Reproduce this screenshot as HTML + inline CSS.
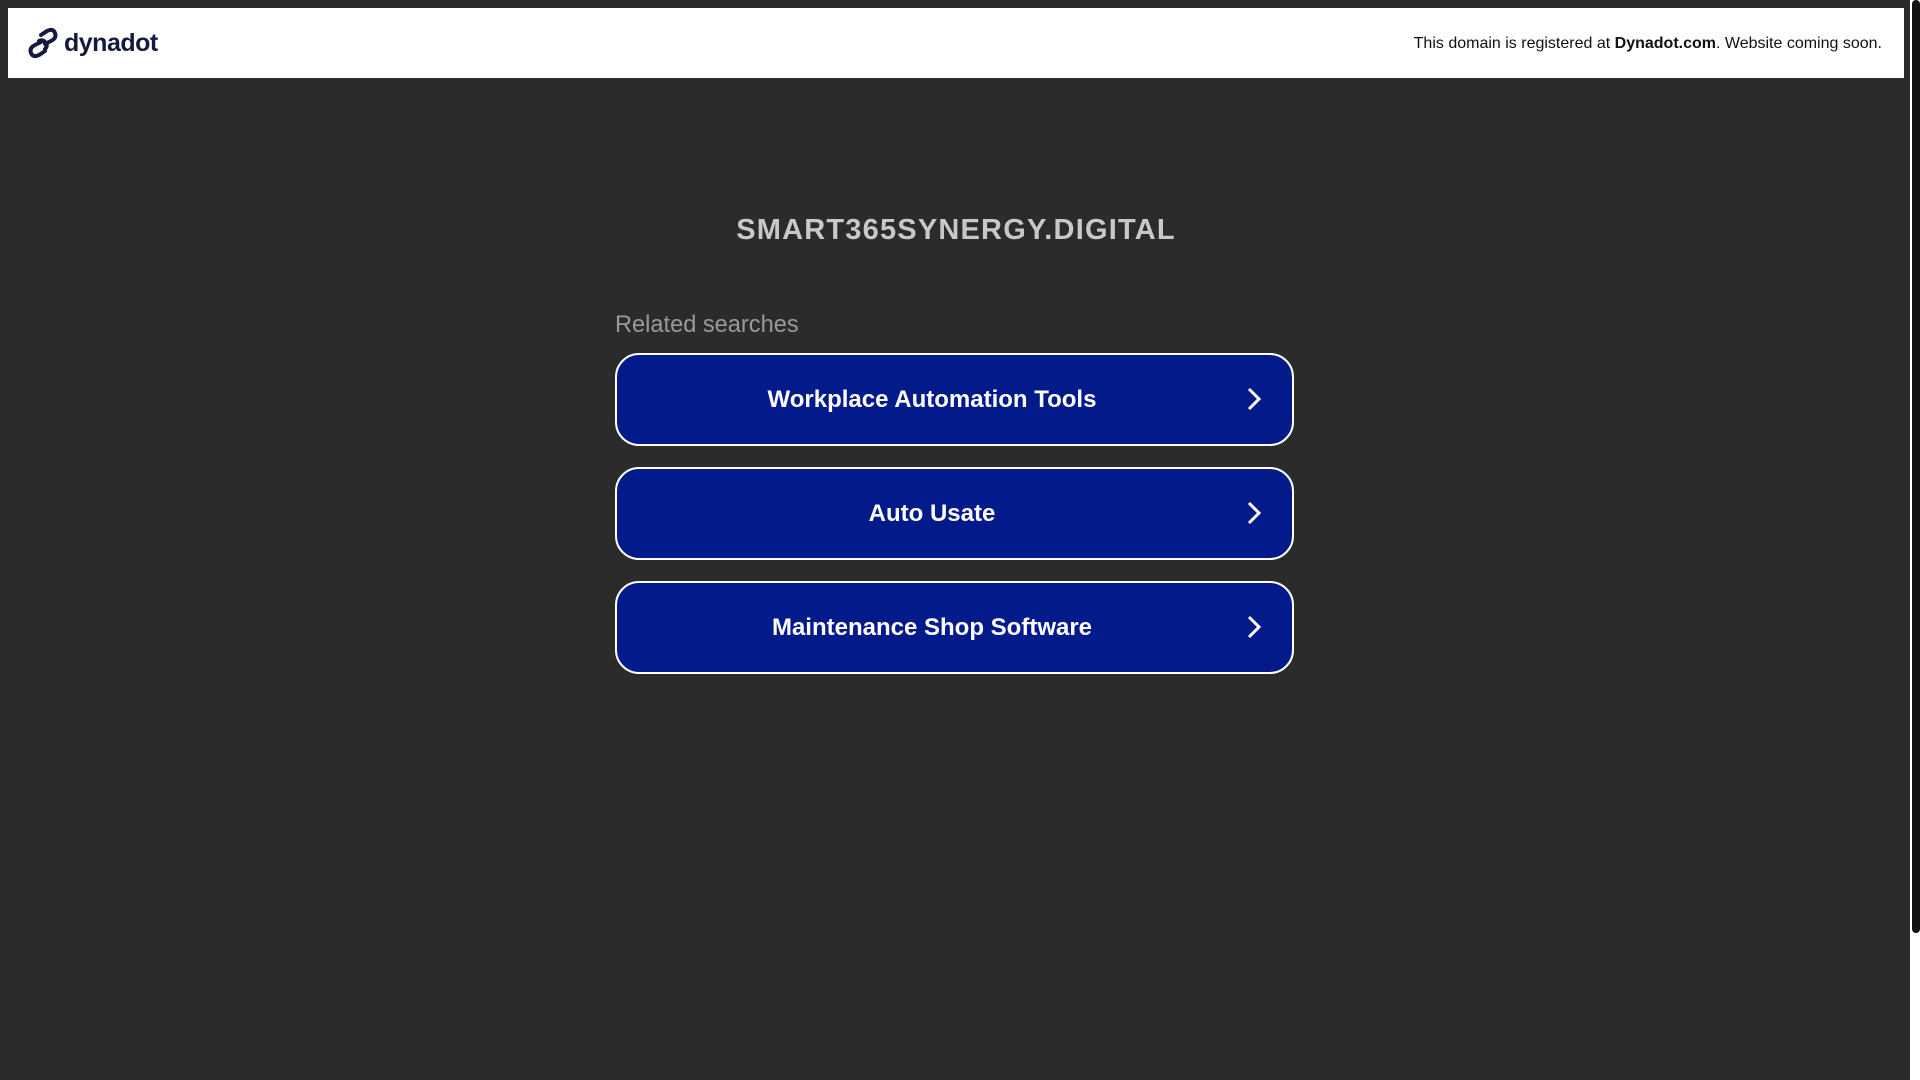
<!DOCTYPE html>
<html><head><meta charset="utf-8"><style>
html,body{margin:0;padding:0;width:1920px;height:1080px;overflow:hidden;background:#2b2b2b;font-family:"Liberation Sans",sans-serif;}
.hdr{position:absolute;left:8px;top:8px;width:1896px;height:70px;background:#fff;}
.logo{position:absolute;left:19px;top:19px;display:flex;align-items:center;}
.logo span{font-weight:bold;font-size:25px;color:#141a3d;margin-left:5px;letter-spacing:-0.5px}
.note{position:absolute;right:22px;top:27px;font-size:16px;color:#111;}
.sb{position:absolute;left:1912px;top:0;width:8px;height:933px;background:#111;border-radius:4px;}
.sbt{position:absolute;left:1910px;top:0;width:10px;height:1080px;background:#fff;}
h1{position:absolute;left:0;width:1912px;top:214px;margin:0;text-align:center;font-size:29px;color:#c8c8c8;letter-spacing:1.2px;}
.rel{position:absolute;left:615px;top:312px;font-size:23.6px;color:#999;}
.btn{position:absolute;left:615px;width:675px;height:89px;border:2px solid #fff;border-radius:24px;background:#021a8a;color:#fff;font-weight:bold;font-size:24px;display:flex;align-items:center;justify-content:center;}
.btn span{margin-right:45px}
.btn svg{position:absolute;right:30px;top:31px}
</style></head><body>
<div class="hdr">
<div class="logo"><svg width="32" height="32" viewBox="0 0 32 32" fill="none" stroke="#141a3d" stroke-width="4" stroke-linecap="round"><path d="M14 8 L20 4 Q26 1 28 6 Q30 11 24 14 L18 17"/><path d="M18 24 L12 28 Q6 31 4 26 Q2 21 8 18 L14 15"/><path d="M12 14 Q16 12 19 16 Q21 19 18 22"/></svg><span>dynadot</span></div>
<div class="note">This domain is registered at <b>Dynadot.com</b>. Website coming soon.</div>
</div>
<div class="sbt"></div><div class="sb"></div>
<h1>SMART365SYNERGY.DIGITAL</h1>
<div class="rel">Related searches</div>
<div class="btn" style="top:353px"><span>Workplace Automation Tools</span><svg width="16" height="26" viewBox="0 0 16 26"><path d="M3 3 L13 13 L3 23" fill="none" stroke="#fff" stroke-width="3"/></svg></div>
<div class="btn" style="top:467px"><span>Auto Usate</span><svg width="16" height="26" viewBox="0 0 16 26"><path d="M3 3 L13 13 L3 23" fill="none" stroke="#fff" stroke-width="3"/></svg></div>
<div class="btn" style="top:581px"><span>Maintenance Shop Software</span><svg width="16" height="26" viewBox="0 0 16 26"><path d="M3 3 L13 13 L3 23" fill="none" stroke="#fff" stroke-width="3"/></svg></div>
</body></html>
